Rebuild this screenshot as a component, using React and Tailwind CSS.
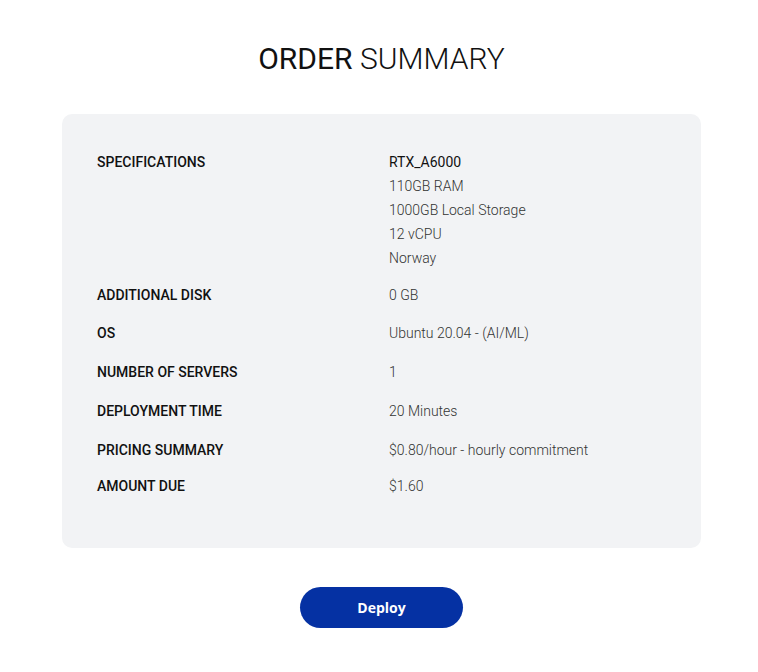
const rows = [
  { label: "Specifications", values: ["RTX_A6000", "110GB RAM", "1000GB Local Storage", "12 vCPU", "Norway"], mt: "" },
  { label: "Additional Disk", values: ["0 GB"], mt: "mt-[13px]" },
  { label: "OS", values: ["Ubuntu 20.04 - (AI/ML)"], mt: "mt-[14px]" },
  { label: "Number of Servers", values: ["1"], mt: "mt-[15px]" },
  { label: "Deployment Time", values: ["20 Minutes"], mt: "mt-[15px]" },
  { label: "Pricing Summary", values: ["$0.80/hour - hourly commitment"], mt: "mt-[15px]" },
  { label: "Amount Due", values: ["$1.60"], mt: "mt-[12px]" },
];

export default function App() {
  return (
    <div className="min-h-[672px] bg-white pl-[5px] font-['Roboto',sans-serif]">
      {/* Title */}
      <h1 className="pt-[40px] text-center text-[30px] leading-[38px] text-[#111]">
        <span className="font-normal">ORDER</span> <span className="font-light">SUMMARY</span>
      </h1>

      {/* Summary card */}
      <div className="mx-auto mt-[36px] w-[639px] rounded-[10px] bg-[#f2f3f5] px-[35px] pt-[36px] pb-[50px]">
        <div className="flex flex-col">
          {rows.map((r) => (
            <div key={r.label} className={`grid grid-cols-[292px_1fr] text-[14px] leading-[24px] ${r.mt}`}>
              <div className="font-medium uppercase text-[#111]">{r.label}</div>
              <div className="flex flex-col font-light text-[#333]">
                {r.values.map((v, i) => (
                  <span key={v} className={i === 0 && r.values.length > 1 ? "font-normal text-[#111]" : ""}>{v}</span>
                ))}
              </div>
            </div>
          ))}
        </div>
      </div>

      {/* Action */}
      <div className="mt-[39px] flex justify-center">
        <button className="h-[41px] w-[163px] rounded-full bg-[#0531a3] font-['Open_Sans',sans-serif] text-[14px] font-bold text-white">
          Deploy
        </button>
      </div>
    </div>
  );
}
